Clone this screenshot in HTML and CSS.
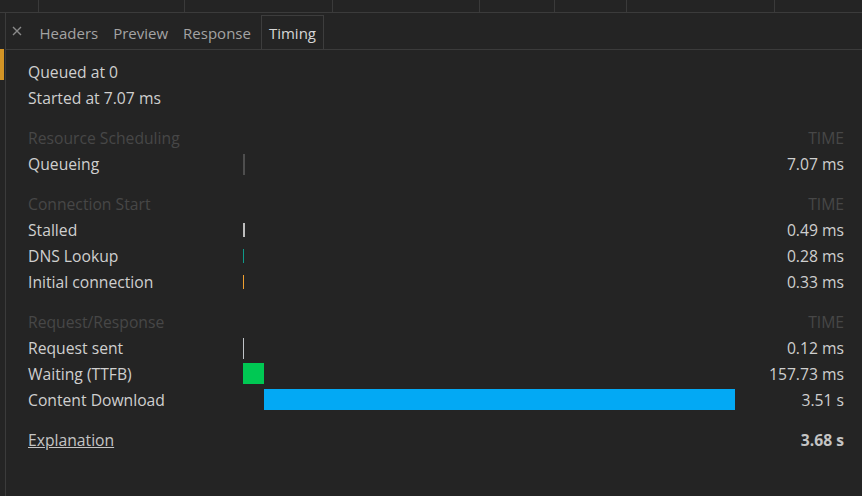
FILE: index.html
```html
<!DOCTYPE html>
<html>
<head>
<meta charset="utf-8">
<link rel="stylesheet" href="styles.css">
</head>
<body>
<div class="overview">
  <span class="gl" style="width:39px"></span>
  <span class="gl" style="width:146px"></span>
  <span class="gl" style="width:148px"></span>
  <span class="gl" style="width:147px"></span>
  <span class="mk" style="width:75px"><i class="red"></i><i class="blue"></i></span>
  <span class="gl" style="width:72px"></span>
  <span class="gl" style="width:148px"></span>
</div>
<div class="main">
  <div class="gutter"><div class="sel"></div></div>
  <div class="panel">
    <div class="tabs">
      <span class="close"><svg width="10" height="10" viewBox="0 0 10 10"><path d="M1 1L9 9M9 1L1 9" stroke="#8a8a8a" stroke-width="1.4" fill="none"/></svg></span>
      <span class="tab">Headers</span>
      <span class="tab">Preview</span>
      <span class="tab">Response</span>
      <span class="tab active">Timing</span>
    </div>
    <div class="content">
      <div class="row"><span class="label">Queued at 0</span></div>
      <div class="row"><span class="label">Started at 7.07 ms</span></div>

      <div class="row head gap"><span class="label">Resource Scheduling</span><span class="bars"></span><span class="val">TIME</span></div>
      <div class="row"><span class="label">Queueing</span><span class="bars"><i class="ln queue"></i></span><span class="val">7.07 ms</span></div>

      <div class="row head gap"><span class="label">Connection Start</span><span class="bars"></span><span class="val">TIME</span></div>
      <div class="row"><span class="label">Stalled</span><span class="bars"><i class="ln stalled"></i></span><span class="val">0.49 ms</span></div>
      <div class="row"><span class="label">DNS Lookup</span><span class="bars"><i class="ln dns"></i></span><span class="val">0.28 ms</span></div>
      <div class="row"><span class="label">Initial connection</span><span class="bars"><i class="ln conn"></i></span><span class="val">0.33 ms</span></div>

      <div class="row head gap"><span class="label">Request/Response</span><span class="bars"></span><span class="val">TIME</span></div>
      <div class="row"><span class="label">Request sent</span><span class="bars"><i class="ln sent"></i></span><span class="val">0.12 ms</span></div>
      <div class="row"><span class="label">Waiting (TTFB)</span><span class="bars"><i class="bar wait" style="width:21px"></i></span><span class="val">157.73 ms</span></div>
      <div class="row"><span class="label">Content Download</span><span class="bars"><i class="bar dl" style="margin-left:21px;width:471px"></i></span><span class="val">3.51 s</span></div>

      <div class="row gap"><span class="label"><a class="expl">Explanation</a></span><span class="bars"></span><span class="val total">3.68 s</span></div>
    </div>
  </div>
</div>
</body>
</html>
```
FILE: styles.css
```css
* { box-sizing: border-box; }
html, body { margin: 0; padding: 0; }
body {
  background: #242424;
  width: 862px;
  height: 496px;
  overflow: hidden;
  font-family: "Open Sans", "Noto Sans", sans-serif;
  font-size: 15.7px;
  color: #cfcfcf;
}
.overview {
  display: flex;
  height: 13px;
  border-bottom: 1px solid #3b3b3b;
}
.gl {
  display: block;
  height: 12px;
  border-right: 1px solid #3a3a3a;
  flex: none;
}
.mk { display: flex; flex: none; height: 12px; border-right: 1px solid #3a3a3a; }
.mk i { display: block; width: 2px; height: 12px; }
.mk .red { margin-left: 74px; background: #d77a8a; }
.mk .blue { background: #6f7be6; }
.main { display: flex; height: 483px; }
.gutter {
  width: 6px;
  flex: none;
  border-right: 1px solid #3b3b3b;
  padding-top: 36px;
}
.sel { width: 4px; height: 31px; background: #d39425; }
.panel { flex: 1; }
.tabs {
  display: flex;
  align-items: flex-end;
  height: 37px;
  border-bottom: 1px solid #3b3b3b;
  padding-left: 6px;
  font-size: 15px;
}
.close {
  display: flex;
  width: 10px;
  height: 10px;
  margin-bottom: 13px;
  margin-right: 10px;
}
.tab {
  color: #a3a3a3;
  height: 34px;
  line-height: 34px;
  padding: 0 6.5px;
  border: 1px solid transparent;
  border-bottom: none;
}
.tab.active {
  color: #d6d6d6;
  border-color: #3d3d3d;
  padding: 0 6.5px;
  margin-left: 3px;
}
.content { padding: 9px 18px 0 22px; }
.row {
  display: flex;
  align-items: center;
  height: 26px;
}
.row.gap { margin-top: 14px; }
.label { width: 215px; flex: none; white-space: nowrap; }
.bars { width: 492px; flex: none; display: flex; align-items: center; }
.val { flex: 1; text-align: right; white-space: nowrap; }
.head .label, .head .val { color: #474747; }
.ln { display: block; flex: none; }
.ln.queue { width: 2px; height: 21px; background: #3e3e3e; border: 1px solid #4e4e4e; margin-top: 1px; }
.ln.stalled { width: 2px; height: 14px; background: #bdbdbd; margin-top: -1px; }
.ln.dns { width: 1px; height: 14px; background: #0f9a8a; margin-top: -1px; }
.ln.conn { width: 1px; height: 14px; background: #f0a030; margin-top: -1px; }
.ln.sent { width: 1px; height: 21px; background: #c0c4c8; margin-top: 1px; }
.bar { display: block; flex: none; height: 21px; margin-top: -2px; }
.bar.wait { background: #00c853; }
.bar.dl { background: #03a9f4; }
.expl { color: #c4c4c4; text-decoration: underline; }
.total { font-weight: bold; color: #c4c4c4; }
```
